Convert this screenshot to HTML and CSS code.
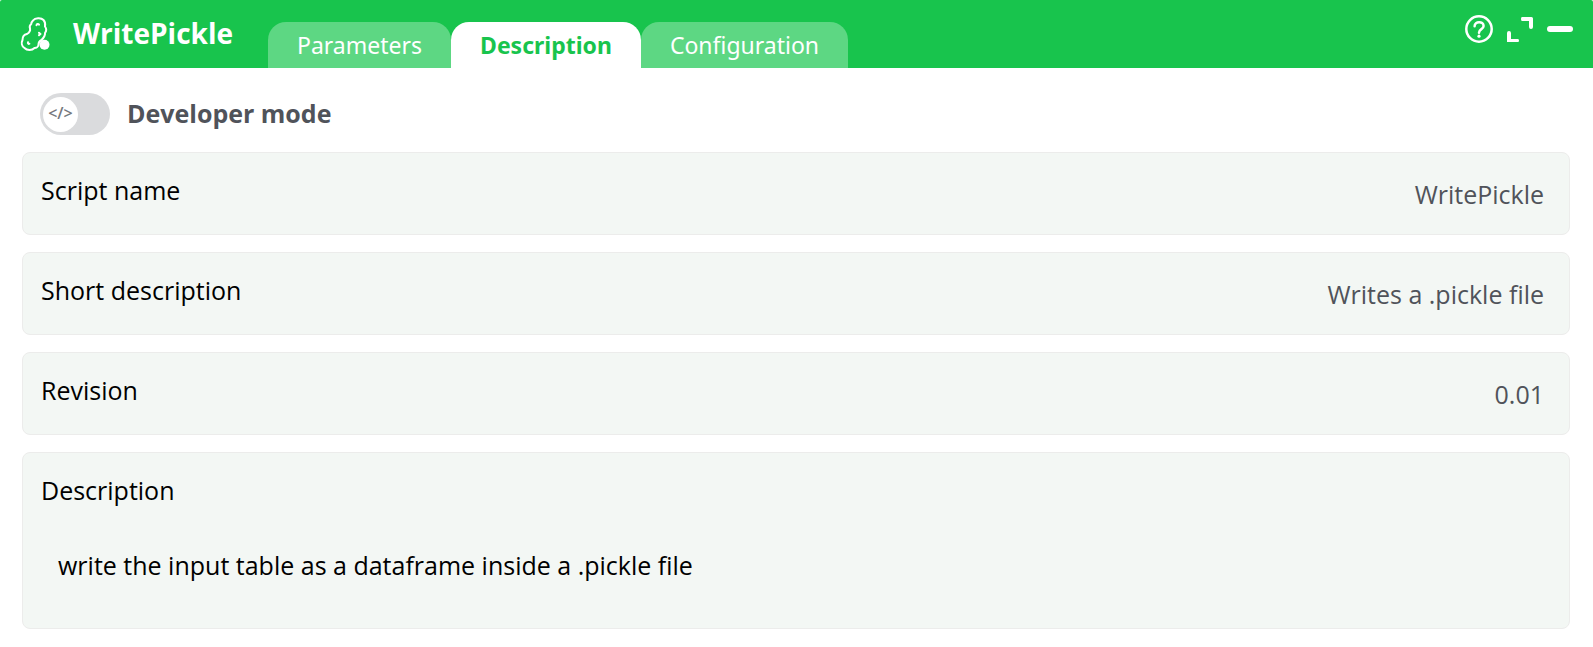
FILE: index.html
```html
<!DOCTYPE html>
<html lang="en">
<head>
  <meta charset="utf-8">
  <title>WritePickle</title>
  <link rel="stylesheet" href="styles.css">
</head>
<body>
  <header class="titlebar">
    <svg class="logo" viewBox="0 0 28 34" aria-hidden="true">
      <path class="logo-line" d="M12 3.500C14 .8 20 .2 22.500 3C24.300 5 24.500 7 24 9.500C25.500 11.500 25.500 14 24 16C24.300 19 22.500 21 20.500 23C18.500 24 17.500 25.500 17.500 27.500C17.500 29.500 15.500 31 13.500 31C11 33.500 6 33.500 3.500 31C.5 29 .3 25.500 1.500 23C1.500 19.500 3.500 17.500 6 17C8.500 15.500 9.500 13.500 9 11.500C8.300 9.500 9 8 10.200 7C10.200 5.500 11 4.500 12 3.500Z"/>
      <path class="logo-line" d="M15.500 8.300C15.500 6.800 17.300 6.600 18 7.600M18 15.800L19.300 17L18 18.300M7 25.200C6.500 26.500 7.500 27.200 8.400 26.700"/>
      <circle class="logo-dot" cx="23.500" cy="27.700" r="5"/>
    </svg>
    <h1 class="title">WritePickle</h1>
    <nav class="tabs" role="tablist">
      <button class="tab" type="button" role="tab" aria-selected="false">Parameters</button>
      <button class="tab tab-active" type="button" role="tab" aria-selected="true">Description</button>
      <button class="tab" type="button" role="tab" aria-selected="false">Configuration</button>
    </nav>
    <div class="actions">
      <button class="action" type="button" aria-label="Help">
        <svg class="icon" viewBox="0 0 28 28" aria-hidden="true">
          <circle class="stroke" cx="14" cy="14" r="12.700"/>
          <path class="stroke" d="M9.600 11.300C9.600 5.800 18.600 5.800 18.600 11C18.600 14.500 14 13.800 14 17.800"/>
          <circle class="fill" cx="14" cy="21.200" r="1.600"/>
        </svg>
      </button>
      <button class="action" type="button" aria-label="Expand">
        <svg class="icon" viewBox="0 0 28 28" aria-hidden="true">
          <path class="fill" d="M16 2H25.500Q27 2 27 3.500V12Q27 14 25 14Q23 14 23 12V6H16Q15 6 15 4Q15 2 16 2ZM1 18Q1 16 3 16Q5 16 5 18V24H12Q13 24 13 25.500Q13 27 12 27H1Z"/>
        </svg>
      </button>
      <button class="action" type="button" aria-label="Minimize">
        <svg class="icon" viewBox="0 0 28 28" aria-hidden="true">
          <rect class="fill" x="0" y="11" width="26" height="6" rx="3"/>
        </svg>
      </button>
    </div>
  </header>
  <main class="content">
    <label class="developer">
      <span class="switch">
        <input class="switch-input" type="checkbox" role="switch">
        <span class="knob" aria-hidden="true">&lt;/&gt;</span>
      </span>
      <span class="developer-label">Developer mode</span>
    </label>
    <section class="card">
      <h2 class="card-label">Script name</h2>
      <p class="card-value">WritePickle</p>
    </section>
    <section class="card">
      <h2 class="card-label">Short description</h2>
      <p class="card-value">Writes a .pickle file</p>
    </section>
    <section class="card">
      <h2 class="card-label">Revision</h2>
      <p class="card-value">0.01</p>
    </section>
    <section class="card card-stacked">
      <h2 class="card-label">Description</h2>
      <p class="card-text">write the input table as a dataframe inside a .pickle file</p>
    </section>
  </main>
</body>
</html>
```
FILE: styles.css
```css
* {
  box-sizing: border-box;
}

body {
  margin: 0;
  background: #fff;
  color: #000;
  font-family: "Open Sans", "Noto Sans", sans-serif;
  font-size: 25px;
  line-height: 34px;
}

h1,
h2,
p {
  margin: 0;
  font-size: inherit;
  font-weight: 400;
}

button {
  border: 0;
  padding: 0;
  background: none;
  color: inherit;
  font: inherit;
  cursor: pointer;
}

.titlebar {
  display: flex;
  align-items: center;
  height: 68px;
  padding: 0 18px 0 21px;
  border-radius: 2px 2px 0 0;
  background: #18c44d;
  color: #fff;
}

.logo {
  width: 28px;
  height: 34px;
  margin-right: 24px;
  fill: none;
  stroke: #fff;
  stroke-linecap: round;
  overflow: visible;
}

.logo-line {
  stroke-width: 2;
}

.logo-dot {
  fill: #fff;
  stroke: none;
}

.title {
  margin-right: 35px;
  padding-bottom: 2px;
  font-size: 28px;
  font-weight: 700;
}

.tabs {
  display: flex;
  align-self: flex-end;
}

.tab {
  height: 46px;
  padding: 0 29px;
  border-radius: 18px 18px 0 0;
  background: #5dd783;
  font-family: "Noto Sans", sans-serif;
  font-size: 23px;
}

.tab-active {
  background: #fff;
  color: #18c44d;
  font-weight: 700;
}

.actions {
  display: flex;
  align-self: flex-start;
  gap: 13px;
  margin-left: auto;
  padding-top: 15px;
}

.action,
.icon {
  display: block;
  width: 28px;
  height: 28px;
}

.stroke {
  fill: none;
  stroke: #fff;
  stroke-width: 2.5;
  stroke-linecap: round;
}

.fill {
  fill: #fff;
}

.content {
  display: flex;
  flex-direction: column;
  gap: 17px;
  padding: 25px 23px 18px 22px;
}

.developer {
  display: flex;
  align-items: center;
  align-self: flex-start;
  gap: 17px;
  padding-left: 18px;
}

.switch {
  display: grid;
  align-items: center;
  width: 70px;
  height: 42px;
}

.switch-input,
.knob {
  grid-area: 1 / 1;
}

.switch-input {
  appearance: none;
  width: 70px;
  height: 42px;
  margin: 0;
  border-radius: 21px;
  background: #dadbdd;
}

.knob {
  width: 35px;
  height: 35px;
  margin-left: 3px;
  border-radius: 50%;
  background: #fff;
  color: #75787d;
  font-size: 16px;
  font-weight: 600;
  line-height: 32px;
  text-align: center;
  z-index: 1;
}

.switch-input:checked + .knob {
  margin-left: 32px;
}

.developer-label {
  padding-bottom: 2px;
  color: #50535a;
  font-weight: 700;
}

.card {
  display: flex;
  align-items: center;
  justify-content: space-between;
  min-height: 83px;
  padding: 20px 25px 20px 18px;
  border: 1px solid #ececeb;
  border-radius: 8px;
  background: #f3f7f4;
}

.card-label {
  align-self: flex-start;
}

.card-value {
  color: #50535a;
  text-align: right;
}

.card-stacked {
  flex-direction: column;
  align-items: flex-start;
  justify-content: flex-start;
  gap: 41px;
  padding-bottom: 46px;
}

.card-text {
  padding-left: 17px;
}
```
